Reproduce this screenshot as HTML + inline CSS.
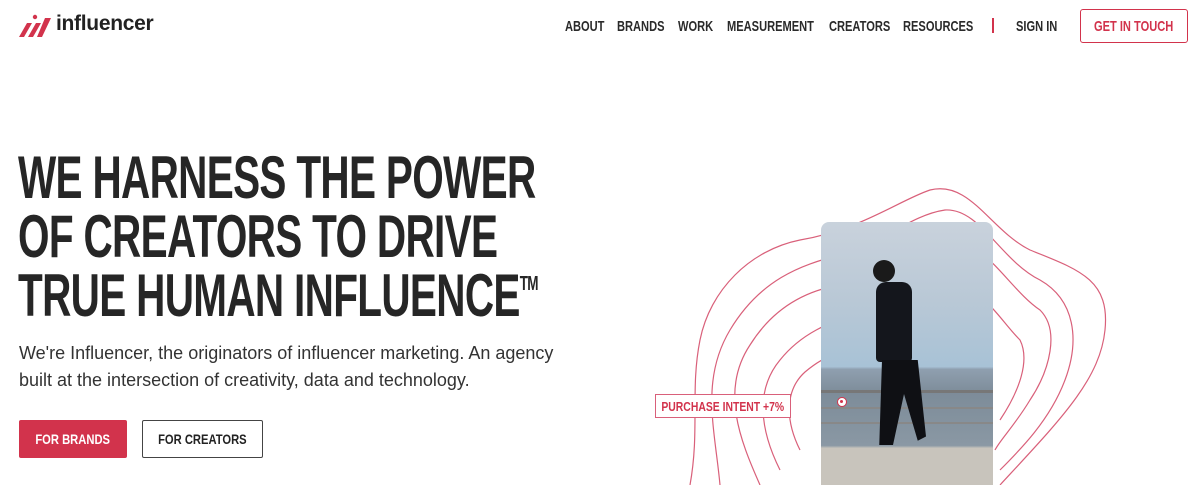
<!DOCTYPE html>
<html><head><meta charset="utf-8"><style>
*{margin:0;padding:0;box-sizing:border-box}
body{width:1200px;height:485px;overflow:hidden;background:#fff;font-family:"Liberation Sans",sans-serif;position:relative;color:#262626}
.n{font-weight:bold;display:inline-block;transform:scaleX(0.74);transform-origin:left center;white-space:nowrap}
.nav{position:absolute;top:18px;font-size:15px;color:#2a2a2a}
h1{position:absolute;left:18px;top:148px;font-size:60px;line-height:59px;letter-spacing:-1px;color:#262626;font-weight:bold;white-space:nowrap;transform:scaleX(0.675);transform-origin:left top}
p{position:absolute;left:19px;top:340px;font-size:18px;line-height:27px;color:#333}
.btn{position:absolute;top:420px;height:38px;font-size:14px;display:flex;align-items:center;justify-content:center;border-radius:2px;font-weight:bold}
.btn span{display:inline-block;transform:scaleX(0.8)}
</style></head><body>
<svg style="position:absolute;left:19px;top:14px" width="34" height="24" viewBox="0 0 34 24"><path d="M0 23 L8 9 L13 9 L5 23Z M9 23 L17 9 L22 9 L14 23Z M18 23 L26 4 L32 4 L23 23Z" fill="#d2334c"/><circle cx="16" cy="3" r="2.2" fill="#d2334c"/></svg>
<div style="position:absolute;left:56px;top:12px;font-size:21px;font-weight:bold;color:#222;letter-spacing:-0.3px">influencer</div>
<div class="nav n" style="left:565px">ABOUT</div>
<div class="nav n" style="left:617px">BRANDS</div>
<div class="nav n" style="left:678px">WORK</div>
<div class="nav n" style="left:727px">MEASUREMENT</div>
<div class="nav n" style="left:829px">CREATORS</div>
<div class="nav n" style="left:903px">RESOURCES</div>
<div style="position:absolute;left:992px;top:18px;width:2px;height:15px;background:#d2334c"></div>
<div class="nav n" style="left:1016px">SIGN IN</div>
<div style="position:absolute;left:1080px;top:9px;width:108px;height:34px;border:1.5px solid #d2334c;border-radius:3px;color:#d2334c;font-size:15px;font-weight:bold;display:flex;align-items:center;justify-content:center"><span style="display:inline-block;transform:scaleX(0.74);white-space:nowrap">GET IN TOUCH</span></div>
<h1>WE HARNESS THE POWER<br>OF CREATORS TO DRIVE<br>TRUE HUMAN INFLUENCE<span style="font-size:20px;line-height:0;position:relative;top:-26px">TM</span></h1>
<p>We're Influencer, the originators of influencer marketing. An agency<br>built at the intersection of creativity, data and technology.</p>
<div class="btn" style="left:19px;width:108px;background:#d2334c;color:#fff"><span>FOR BRANDS</span></div>
<div class="btn" style="left:142px;width:121px;border:1px solid #444;color:#222"><span>FOR CREATORS</span></div>
<svg style="position:absolute;left:0;top:0" width="1200" height="485" fill="none" stroke="#d9607a" stroke-width="1.2">
<path d="M690 485 C700 430 690 390 700 340 C710 290 750 250 800 240 C860 230 900 200 930 190 C970 180 990 230 1030 250 C1080 270 1110 280 1105 330 C1100 380 1060 420 1000 485"/>
<path d="M720 485 C715 430 700 380 730 330 C760 280 800 265 840 255 C880 245 910 215 945 210 C980 208 1000 260 1040 280 C1075 300 1080 340 1065 380 C1050 420 1020 450 1000 470"/>
<path d="M760 485 C740 440 720 390 750 345 C775 305 810 290 840 285 C880 280 910 240 950 240 C985 240 1010 290 1040 310 C1060 330 1050 370 1030 400 C1015 425 1000 440 995 450"/>
<path d="M780 470 C760 430 755 390 780 360 C800 335 830 320 860 315 C900 310 920 280 955 285 C985 290 1000 320 1020 340 C1030 360 1020 390 1000 420"/>
<path d="M800 450 C785 420 785 390 805 372 C825 355 850 345 880 345 C910 345 930 320 960 325"/>
</svg>
<div style="position:absolute;left:821px;top:222px;width:172px;height:263px;border-radius:8px 8px 0 0;overflow:hidden;background:linear-gradient(#c9d2dc 0%,#b9c8d6 30%,#a8c2d6 55%,#8f9faf 56%,#7d8c99 65%,#8a98a4 85%,#c8c4bc 86%,#c8c4bc 100%)">
<div style="position:absolute;left:0;right:0;top:168px;height:3px;background:#777"></div>
<div style="position:absolute;left:0;right:0;top:185px;height:2px;background:#888"></div>
<div style="position:absolute;left:0;right:0;top:200px;height:2px;background:#888"></div>
<div style="position:absolute;left:52px;top:38px;width:22px;height:22px;border-radius:50%;background:#1a1a1a"></div>
<div style="position:absolute;left:55px;top:60px;width:36px;height:80px;border-radius:10px 10px 4px 4px;background:#14161c"></div>
<div style="position:absolute;left:50px;top:138px;width:55px;height:85px;background:#0f1014;clip-path:polygon(20% 0,85% 0,100% 90%,85% 95%,60% 40%,40% 100%,15% 100%)"></div>
</div>
<div style="position:absolute;left:837px;top:397px;width:10px;height:10px;border:1.5px solid #d2334c;border-radius:50%;background:#fff"><div style="margin:2px;width:3px;height:3px;border-radius:50%;background:#d2334c"></div></div>
<div style="position:absolute;left:655px;top:394px;width:136px;height:24px;border:1.5px solid #d9607a;background:#fff;color:#d2334c;font-size:13px;font-weight:bold;display:flex;align-items:center;justify-content:center"><span style="display:inline-block;transform:scaleX(0.8);white-space:nowrap">PURCHASE INTENT +7%</span></div>
</body></html>
